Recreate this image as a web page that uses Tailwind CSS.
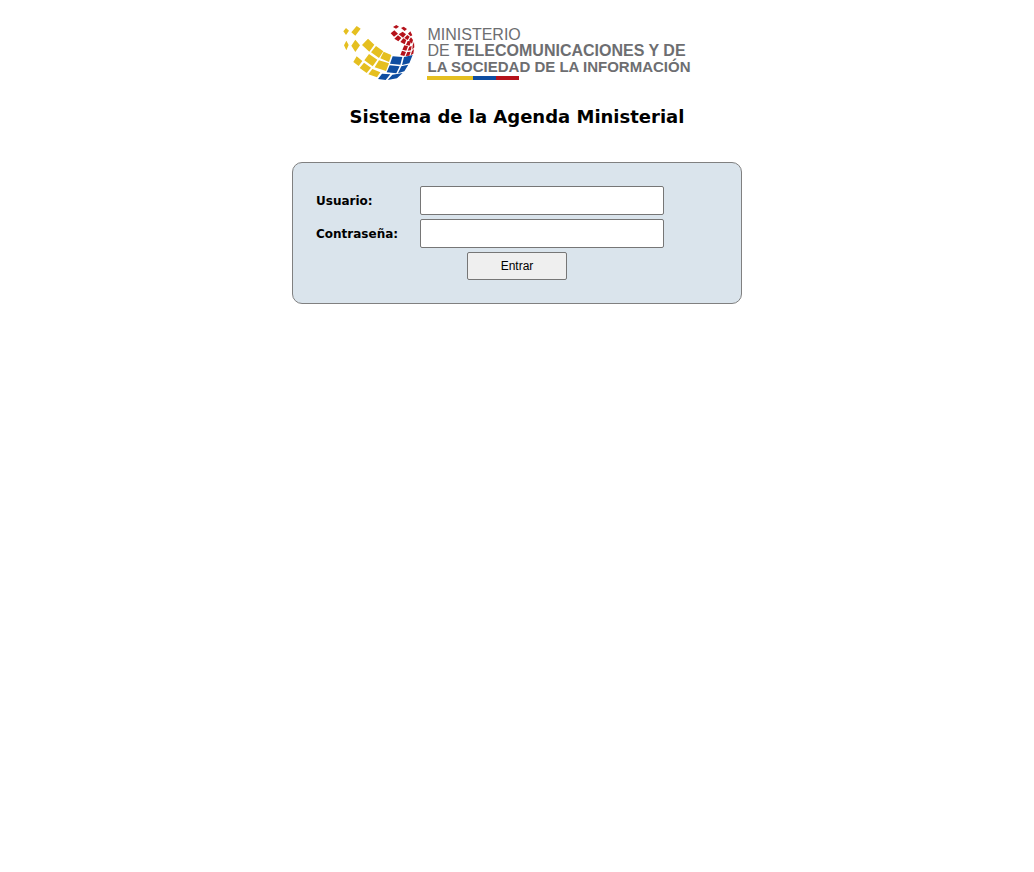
<!DOCTYPE html>
<html lang="es">
<head>
<meta charset="utf-8">
<title>Sistema de la Agenda Ministerial</title>
<script src="https://cdn.jsdelivr.net/npm/@tailwindcss/browser@4"></script>
</head>
<body class="bg-white font-[Verdana,'DejaVu_Sans',sans-serif] text-black">
<main class="flex flex-col items-center px-4 pt-5">
  <header class="flex flex-col items-center">
    <div class="flex items-start gap-[7px] pr-[3px]">
      <svg class="h-16 w-20 shrink-0" viewBox="0 0 240 192" aria-hidden="true">
        <path fill="#e5bf20" d="M10 34L18 24 27 32 18 45ZM34 37L50 18 62 26 46 47ZM12 76L19 62 26 75 19 91ZM34 77L46 59 60 76 46 96ZM66 75L84 56 103 74 88 95ZM93 97L108 78 130 94 117 114ZM121 115L131 95 154 105 147 126ZM73 121L87 102 112 119 98 139ZM104 142L117 121 147 130 138 153ZM40 126L50 109 67 123 56 138ZM59 144L72 128 93 143 80 159ZM85 163L97 147 121 157 111 172Z"/>
        <path fill="#0e4da1" d="M158 109L187 111 181 134 150 131ZM192 111L218 105 208 130 186 135ZM149 136L179 139 169 160 140 157ZM184 139L205 134 193 154 174 160ZM126 161L151 163 137 180 114 177ZM157 164L188 159 171 175 143 180Z"/>
        <path fill="#b5121b" d="M159 21L169 15 177 20 168 26ZM183 24L191 20 201 27 194 33ZM152 40L163 31 174 41 162 50ZM176 43L188 35 198 43 189 53ZM163 56L174 46 184 54 175 64ZM181 66L190 55 199 60 194 73ZM193 54L202 45 209 50 203 60ZM204 41L211 34 217 46 212 49ZM198 75L203 63 213 64 209 77ZM207 60L213 52 219 60 216 71ZM187 89L193 76 204 79 199 92ZM208 80L215 78 213 91 203 92ZM218 75L222 66 223 82 217 89ZM181 105L186 92 198 96 193 108ZM202 96L212 95 208 107 197 108ZM216 93L222 87 220 101 212 106Z"/>
      </svg>
      <div class="pt-[7px] font-['Liberation_Sans',sans-serif] text-base leading-4 text-[#6d6e71]">
        <p>MINISTERIO</p>
        <p>DE <b>TELECOMUNICACIONES Y DE</b></p>
        <p class="text-[15px] leading-4 font-bold">LA SOCIEDAD DE LA INFORMACIÓN</p>
        <div class="mt-px flex h-1 w-23"><span class="w-1/2 bg-[#e5bf20]"></span><span class="w-1/4 bg-[#0e4da1]"></span><span class="w-1/4 bg-[#b5121b]"></span></div>
      </div>
    </div>
    <h1 class="mt-[21px] text-lg leading-6 font-bold">Sistema de la Agenda Ministerial</h1>
  </header>
  <form class="mt-[33px] w-full max-w-[450px] rounded-[10px] border border-[#808080] bg-[#dae4ec] p-[23px]">
    <div class="mb-1 flex items-center">
      <label for="usuario" class="w-26 text-xs font-bold">Usuario:</label>
      <input id="usuario" type="text" class="h-[29px] w-61 rounded-xs border border-[#767676] bg-white px-1 text-xs">
    </div>
    <div class="mb-1 flex items-center">
      <label for="clave" class="w-26 text-xs font-bold">Contraseña:</label>
      <input id="clave" type="password" class="h-[29px] w-61 rounded-xs border border-[#767676] bg-white px-1 text-xs">
    </div>
    <button type="submit" class="mx-auto block h-7 w-25 rounded-xs border border-[#767676] bg-[#efefef] font-['Liberation_Sans',sans-serif] text-xs">Entrar</button>
  </form>
</main>
</body>
</html>
